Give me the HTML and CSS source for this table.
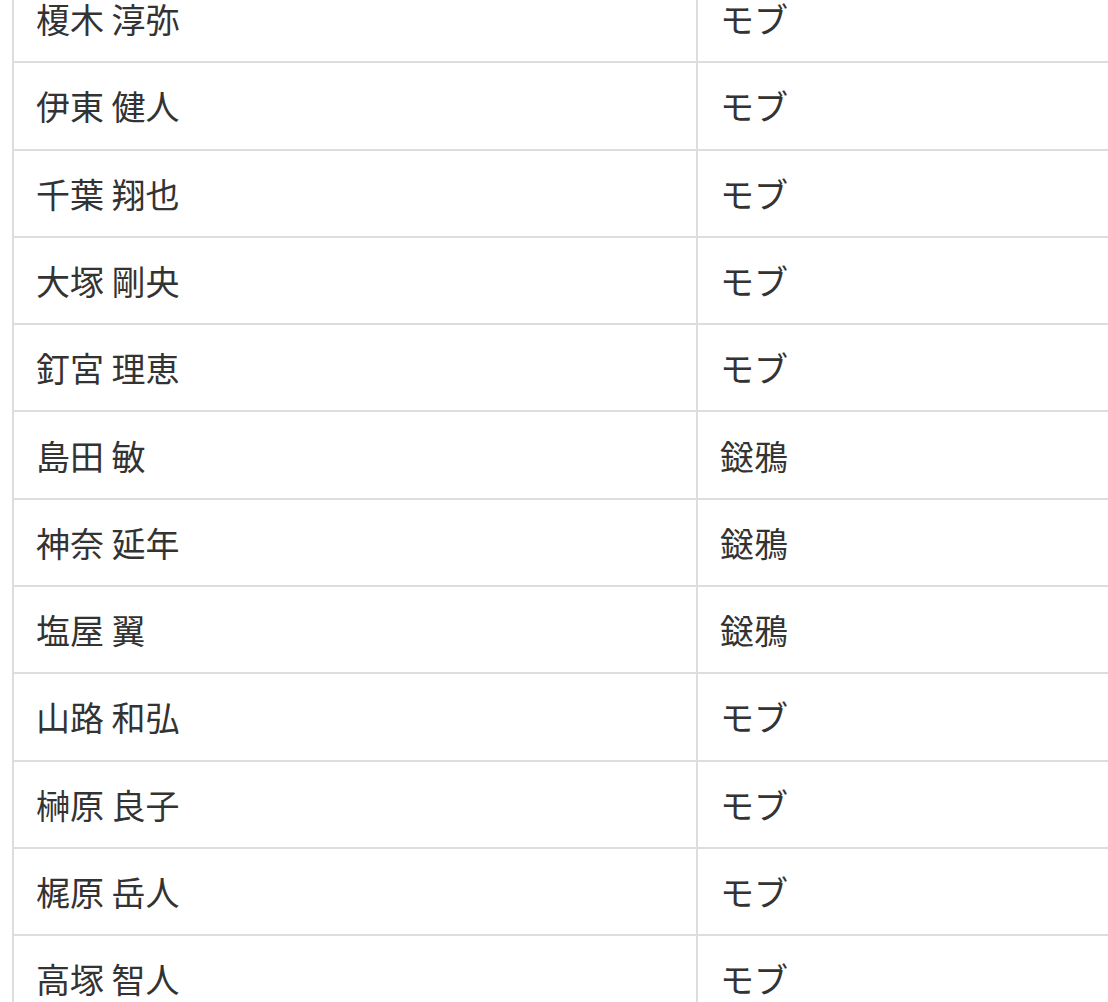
FILE: index.html
```html
<!DOCTYPE html>
<html lang="ja">
<head>
<meta charset="utf-8">
<title>キャスト一覧</title>
<link rel="stylesheet" href="styles.css">
</head>
<body>
<div class="page">
  <table class="cast">
    <tbody>
      <tr><td class="name">榎木 淳弥</td><td class="role">モブ</td></tr>
      <tr><td class="name">伊東 健人</td><td class="role">モブ</td></tr>
      <tr><td class="name">千葉 翔也</td><td class="role">モブ</td></tr>
      <tr><td class="name">大塚 剛央</td><td class="role">モブ</td></tr>
      <tr><td class="name">釘宮 理恵</td><td class="role">モブ</td></tr>
      <tr><td class="name">島田 敏</td><td class="role">鎹鴉</td></tr>
      <tr><td class="name">神奈 延年</td><td class="role">鎹鴉</td></tr>
      <tr><td class="name">塩屋 翼</td><td class="role">鎹鴉</td></tr>
      <tr><td class="name">山路 和弘</td><td class="role">モブ</td></tr>
      <tr><td class="name">榊原 良子</td><td class="role">モブ</td></tr>
      <tr><td class="name">梶原 岳人</td><td class="role">モブ</td></tr>
      <tr><td class="name">高塚 智人</td><td class="role">モブ</td></tr>
    </tbody>
  </table>
</div>
</body>
</html>
```

FILE: styles.css
```css
html, body {
  margin: 0;
  padding: 0;
  background: #ffffff;
  overflow: hidden;
}

body {
  font-family: "Noto Sans CJK JP", "Noto Sans", sans-serif;
  color: #333333;
}

.page {
  margin-top: -26px;
  margin-left: 12px;
}

.cast {
  border-collapse: separate;
  border-spacing: 0;
  width: 1096px;
  table-layout: fixed;
}

.cast td {
  font-size: 34px;
  line-height: 51px;
  padding: 17.15px 22px;
  border-bottom: 2px solid #dddddd;
  text-align: left;
  vertical-align: middle;
  white-space: nowrap;
}

.cast tr:first-child td {
  border-top: 2px solid #dddddd;
}

.cast td.name {
  width: 638px;
  border-left: 2px solid #dddddd;
  border-right: 2px solid #dddddd;
}
```
